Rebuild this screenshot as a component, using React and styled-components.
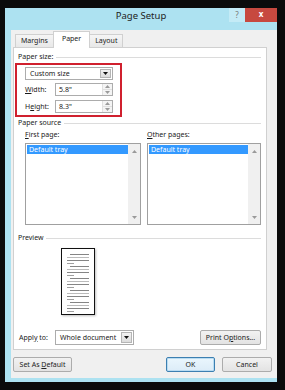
import React from 'react';
import styled, { createGlobalStyle } from 'styled-components';

const GlobalStyle = createGlobalStyle`
  html, body {
    margin: 0;
    background: #0b0b0b;
  }
  body {
    font-family: 'Noto Sans', 'Liberation Sans', sans-serif;
    font-size: 7px;
    color: #1a1a1a;
  }
`;

const DropArrow = () => (
  <svg width="5" height="3" viewBox="0 0 5 3">
    <path d="M0 0 H5 L2.5 3 Z" fill="#111" />
  </svg>
);

const ScrollArrow = ({ down }) => (
  <svg width="5" height="3" viewBox="0 0 5 3">
    <path d={down ? 'M0 0 H5 L2.5 3 Z' : 'M0 3 H5 L2.5 0 Z'} fill="#9a9a9a" />
  </svg>
);

const PagePreview = () => {
  const paragraphs = [0, 12, 24, 36, 48];
  return (
    <svg width="34" height="67" viewBox="0 0 34 67">
      <rect x="0.5" y="0.5" width="33" height="66" fill="#fff" stroke="#111" />
      {paragraphs.map((top) => (
        <g key={top} strokeWidth="0.8">
          <line x1="9" x2="28" y1={top + 6.5} y2={top + 6.5} stroke="#666" />
          <line x1="6" x2="28" y1={top + 9.5} y2={top + 9.5} stroke="#aaa" />
          <line x1="6" x2="28" y1={top + 12.5} y2={top + 12.5} stroke="#666" />
          <line x1="6" x2="13" y1={top + 15.5} y2={top + 15.5} stroke="#888" />
        </g>
      ))}
    </svg>
  );
};

const PageSetup = () => (
  <Screen>
    <GlobalStyle />
    <Window>
      <TitleBar>
        <span />
        <Title>Page Setup</Title>
        <Controls>
          <HelpButton>?</HelpButton>
          <CloseButton>x</CloseButton>
        </Controls>
      </TitleBar>
      <Content>
        <Tabs>
          <Tab>Margins</Tab>
          <Tab $active>Paper</Tab>
          <Tab>Layout</Tab>
        </Tabs>
        <Panel>
          <GroupHeader>Paper size:</GroupHeader>
          <Highlight>
            <Combo $width={88}>
              <ComboText>Custom size</ComboText>
              <ComboButton><DropArrow /></ComboButton>
            </Combo>
            <FieldRow>
              <FieldLabel><u>W</u>idth:</FieldLabel>
              <SpinInput>
                <SpinText>5.8"</SpinText>
                <Spinner>
                  <SpinHalf><ScrollArrow /></SpinHalf>
                  <SpinHalf><ScrollArrow down /></SpinHalf>
                </Spinner>
              </SpinInput>
            </FieldRow>
            <FieldRow>
              <FieldLabel>H<u>e</u>ight:</FieldLabel>
              <SpinInput>
                <SpinText>8.3"</SpinText>
                <Spinner>
                  <SpinHalf><ScrollArrow /></SpinHalf>
                  <SpinHalf><ScrollArrow down /></SpinHalf>
                </Spinner>
              </SpinInput>
            </FieldRow>
          </Highlight>
          <GroupHeader>Paper source</GroupHeader>
          <SourceGrid>
            <SourceColumn>
              <SourceLabel><u>F</u>irst page:</SourceLabel>
              <ListBox $width={116}>
                <ListItems>
                  <ListItem>Default tray</ListItem>
                </ListItems>
                <ScrollBar>
                  <ScrollArrow />
                  <ScrollArrow down />
                </ScrollBar>
              </ListBox>
            </SourceColumn>
            <SourceColumn>
              <SourceLabel><u>O</u>ther pages:</SourceLabel>
              <ListBox $width={114}>
                <ListItems>
                  <ListItem>Default tray</ListItem>
                </ListItems>
                <ScrollBar>
                  <ScrollArrow />
                  <ScrollArrow down />
                </ScrollBar>
              </ListBox>
            </SourceColumn>
          </SourceGrid>
          <PreviewHeader>Preview</PreviewHeader>
          <PreviewBox>
            <PagePreview />
          </PreviewBox>
          <ApplyRow>
            <ApplyLabel>Appl<u>y</u> to:</ApplyLabel>
            <Combo $width={79} $height={15}>
              <ComboText>Whole document</ComboText>
              <ComboButton><DropArrow /></ComboButton>
            </Combo>
            <Button $width={61}><span>Print O<u>p</u>tions...</span></Button>
          </ApplyRow>
        </Panel>
        <Footer>
          <Button $width={59}><span>Set As <u>D</u>efault</span></Button>
          <ButtonGroup>
            <Button $width={49} $primary>OK</Button>
            <Button $width={50}>Cancel</Button>
          </ButtonGroup>
        </Footer>
      </Content>
    </Window>
  </Screen>
);

export default PageSetup;

// region STYLES

const Screen = styled.div`
  width: 285px;
  height: 390px;
  padding: 8px 0 0 5px;
  box-sizing: border-box;
`;

const Window = styled.div`
  width: 272px;
  height: 374px;
  background: #ade2f1;
  display: flex;
  flex-direction: column;
`;

const TitleBar = styled.div`
  height: 22px;
  display: grid;
  grid-template-columns: 1fr auto 1fr;
`;

const Title = styled.div`
  font-size: 9.5px;
  line-height: 16px;
  color: #222;
`;

const Controls = styled.div`
  justify-self: end;
  display: flex;
  height: 14px;
`;

const HelpButton = styled.div`
  width: 16px;
  height: 14px;
  background: #c4ebf6;
  color: #777;
  font-size: 8px;
  line-height: 13px;
  text-align: center;
`;

const CloseButton = styled.div`
  width: 32px;
  height: 14px;
  background: #c7493f;
  color: #fff;
  font-weight: 700;
  font-size: 8px;
  line-height: 12px;
  text-align: center;
`;

const Content = styled.div`
  flex: 1;
  margin: 0 0 4px 6px;
  background: #f0f0f0;
  padding: 1px 5px 0 2px;
  display: flex;
  flex-direction: column;
`;

const Tabs = styled.div`
  display: flex;
  align-items: flex-end;
  height: 17px;
  padding-left: 2px;
  margin-bottom: -1px;
  position: relative;
  z-index: 1;
`;

const Tab = styled.div`
  box-sizing: border-box;
  height: ${(p) => (p.$active ? 17 : 14)}px;
  padding: 0 ${(p) => (p.$active ? 8 : 5)}px;
  border: 1px solid #d0d0d0;
  border-bottom: ${(p) => (p.$active ? 'none' : '1px solid #d0d0d0')};
  background: ${(p) => (p.$active ? '#fff' : 'linear-gradient(#f5f5f5, #e8e8e8)')};
  margin-left: ${(p) => (p.$active ? -1 : 0)}px;
  margin-right: ${(p) => (p.$active ? -1 : 0)}px;
  line-height: ${(p) => (p.$active ? 13 : 12)}px;
  color: #222;
  & + & {
    border-left: ${(p) => (p.$active ? '1px solid #d0d0d0' : 'none')};
  }
`;

const Panel = styled.div`
  width: 254px;
  box-sizing: border-box;
  border: 1px solid #d0d0d0;
  background: #fff;
  padding: 4px 5px 4px 4px;
  display: flex;
  flex-direction: column;
`;

const GroupHeader = styled.div`
  height: 10px;
  line-height: 10px;
  display: flex;
  align-items: center;
  gap: 3px;
  color: #222;
  &::after {
    content: '';
    flex: 1;
    height: 1px;
    background: #dcdcdc;
  }
`;

const PreviewHeader = styled(GroupHeader)`
  margin-top: 8px;
`;

const Highlight = styled.div`
  width: 107px;
  box-sizing: border-box;
  margin: 1px 0 1px -3px;
  border: 2px solid #d0202e;
  padding: 2px 7px 2px 8px;
  display: flex;
  flex-direction: column;
  gap: 3px;
`;

const Combo = styled.div`
  width: ${(p) => p.$width}px;
  height: ${(p) => p.$height || 13}px;
  box-sizing: border-box;
  border: 1px solid #acacac;
  background: #fff;
  display: flex;
  align-items: stretch;
`;

const ComboText = styled.div`
  flex: 1;
  padding-left: 4px;
  display: flex;
  align-items: center;
  white-space: nowrap;
`;

const ComboButton = styled.div`
  width: 9px;
  margin: 1px;
  border: 1px solid #b5b5b5;
  background: linear-gradient(#f2f2f2, #dcdcdc);
  display: flex;
  align-items: center;
  justify-content: center;
`;

const FieldRow = styled.div`
  display: flex;
  align-items: center;
  & + & {
    margin-top: 1px;
  }
`;

const FieldLabel = styled.div`
  width: 30px;
`;

const SpinInput = styled.div`
  width: 58px;
  height: 13px;
  box-sizing: border-box;
  border: 1px solid #acacac;
  background: #fff;
  display: flex;
`;

const SpinText = styled.div`
  flex: 1;
  padding-left: 3px;
  line-height: 11px;
`;

const Spinner = styled.div`
  width: 9px;
  display: flex;
  flex-direction: column;
  border-left: 1px solid #e0e0e0;
`;

const SpinHalf = styled.div`
  flex: 1;
  background: #f4f4f4;
  display: flex;
  align-items: center;
  justify-content: center;
  & + & {
    border-top: 1px solid #e0e0e0;
  }
`;

const SourceGrid = styled.div`
  display: flex;
  gap: 6px;
  margin: 2px 0 0 7px;
`;

const SourceColumn = styled.div`
  display: flex;
  flex-direction: column;
`;

const SourceLabel = styled.div`
  height: 10px;
  line-height: 10px;
  margin-bottom: 3px;
`;

const ListBox = styled.div`
  width: ${(p) => p.$width}px;
  height: 82px;
  box-sizing: border-box;
  border: 1px solid #a0a0a0;
  background: #fff;
  display: flex;
`;

const ListItems = styled.div`
  flex: 1;
  padding: 1px 0 0 1px;
`;

const ListItem = styled.div`
  height: 9px;
  line-height: 9px;
  background: #3399ff;
  color: #fff;
  padding-left: 2px;
`;

const ScrollBar = styled.div`
  width: 12px;
  background: #f0f0f0;
  display: flex;
  flex-direction: column;
  align-items: center;
  justify-content: space-between;
  padding: 6px 0 5px;
`;

const PreviewBox = styled.div`
  margin: 5px 0 0 43px;
  height: 67px;
  filter: drop-shadow(1px 1px 1px rgba(0, 0, 0, 0.25));
`;

const ApplyRow = styled.div`
  display: flex;
  align-items: center;
  justify-content: space-between;
  margin-top: 14px;
  height: 16px;
  & > :nth-child(2) {
    margin-right: auto;
  }
`;

const ApplyLabel = styled.div`
  width: 36px;
  padding-left: 1px;
`;

const Button = styled.div`
  width: ${(p) => p.$width}px;
  height: 15px;
  box-sizing: border-box;
  border: 1px solid ${(p) => (p.$primary ? '#3c7fb1' : '#acacac')};
  border-radius: 2px;
  background: ${(p) =>
    p.$primary ? 'linear-gradient(#eaf6fd, #dcecf8)' : 'linear-gradient(#f2f2f2, #e3e3e3)'};
  box-shadow: ${(p) => (p.$primary ? 'inset 0 0 0 1px #b9dcf2' : 'none')};
  display: flex;
  align-items: center;
  justify-content: center;
  white-space: nowrap;
  color: #222;
`;

const Footer = styled.div`
  display: flex;
  justify-content: space-between;
  margin-top: 7px;
`;

const ButtonGroup = styled.div`
  display: flex;
  gap: 7px;
`;

// endregion
